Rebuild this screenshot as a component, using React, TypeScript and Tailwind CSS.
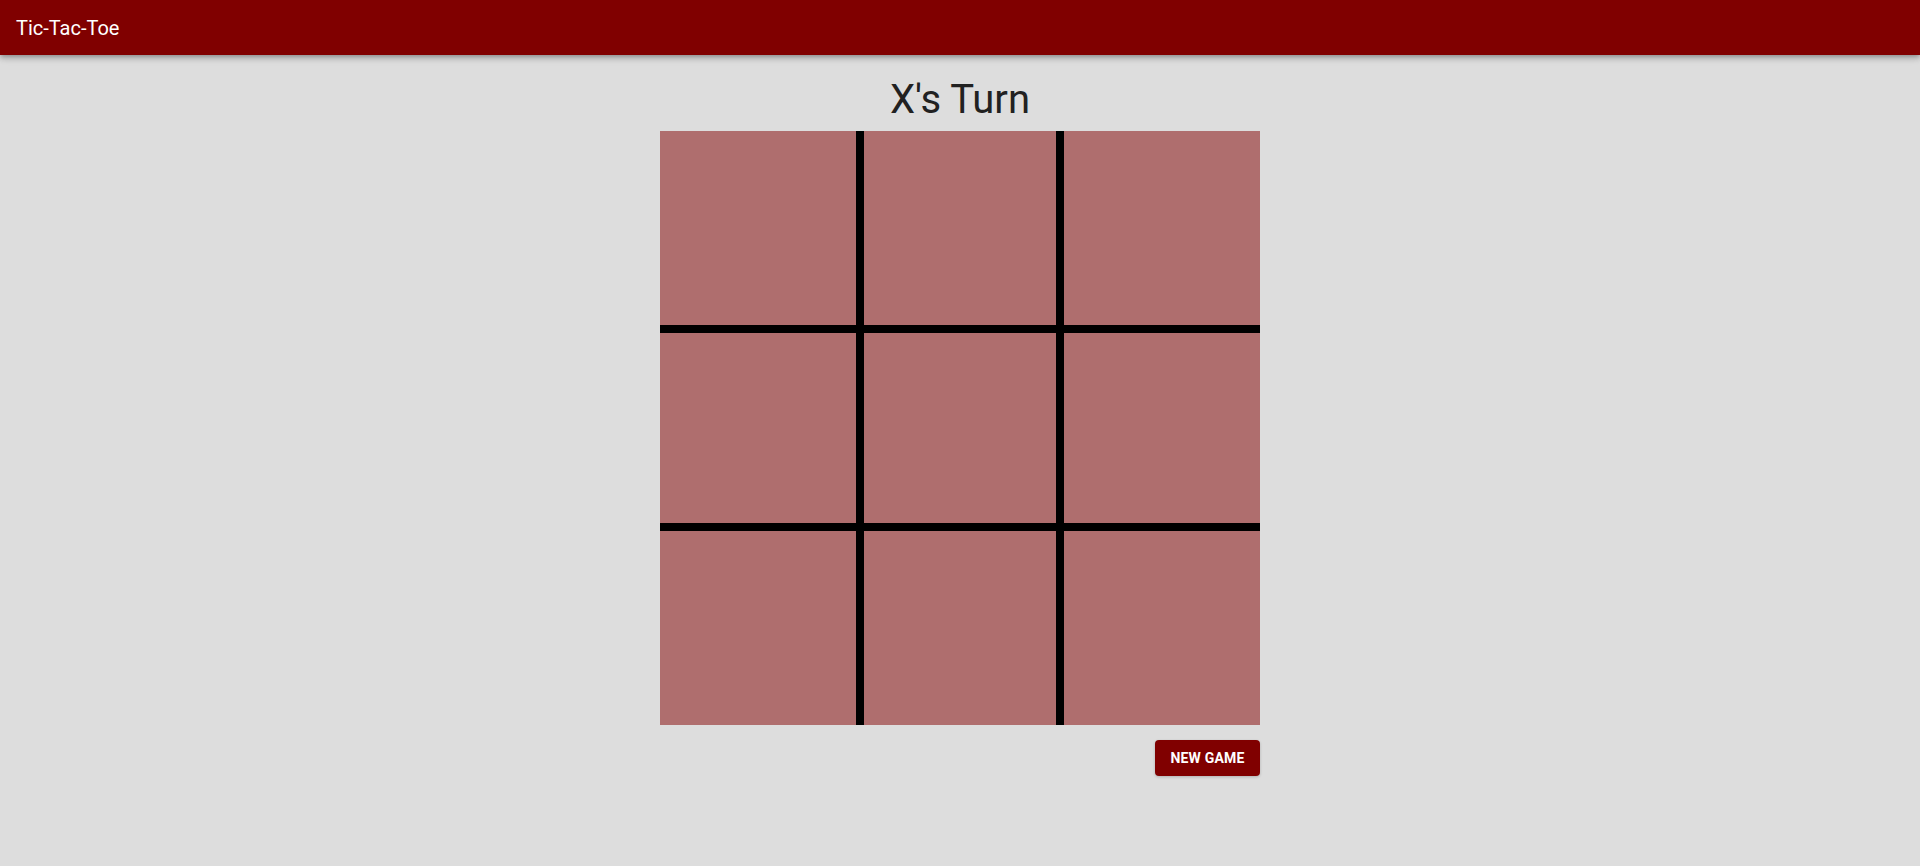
const cells = Array.from({ length: 9 }, (_, i) => i)

const borderFor = (i: number) => {
  const row = Math.floor(i / 3)
  const col = i % 3
  const cls: string[] = []
  if (col > 0) cls.push('border-l-4')
  if (col < 2) cls.push('border-r-4')
  if (row > 0) cls.push('border-t-4')
  if (row < 2) cls.push('border-b-4')
  return cls.join(' ')
}

export default function App() {
  return (
    <div
      className="min-h-screen bg-[#dddddd] flex flex-col"
      style={{ fontFamily: 'Roboto, "Liberation Sans", sans-serif' }}
    >
      {/* App bar */}
      <header className="h-[55px] bg-[#800000] flex items-center px-4 shadow-[0_2px_4px_-1px_rgba(0,0,0,0.2),0_4px_5px_0_rgba(0,0,0,0.14),0_1px_10px_0_rgba(0,0,0,0.12)] relative z-10">
        <span className="text-white text-[20px] leading-none">Tic-Tac-Toe</span>
      </header>

      <main className="flex flex-col items-center">
        <h1 className="mt-[20px] mb-[7px] h-[49px] leading-[49px] text-[40px] text-[#212121] font-normal">
          X's Turn
        </h1>

        {/* Board */}
        <div className="grid grid-cols-[200px_200px_200px] grid-rows-[198px_198px_198px]">
          {cells.map((i) => (
            <button
              key={i}
              className={`bg-[#af6e6e] border-black border-solid ${borderFor(i)}`}
            />
          ))}
        </div>

        <div className="w-[600px] flex justify-end mt-[15px]">
          <button className="h-9 w-[105px] rounded bg-[#800000] text-white text-sm font-bold uppercase tracking-[0.2px] shadow-[0_1px_3px_rgba(0,0,0,0.2)]">
            New Game
          </button>
        </div>
      </main>
    </div>
  )
}
